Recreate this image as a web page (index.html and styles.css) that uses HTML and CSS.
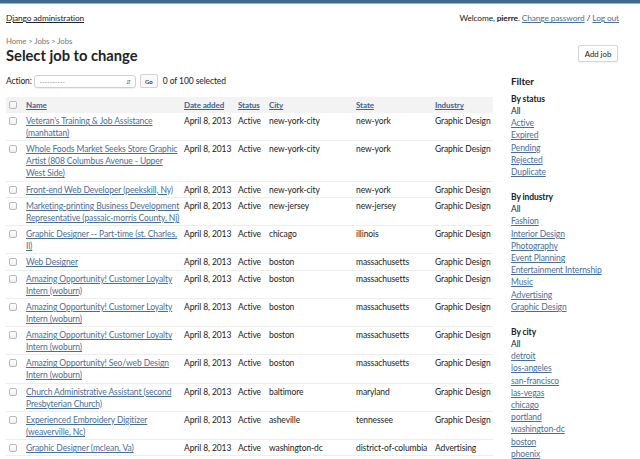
FILE: index.html
```html
<!DOCTYPE html>
<html>
<head>
<meta charset="utf-8">
<link rel="stylesheet" href="styles.css">
</head>
<body>
<div class="topbar"></div>
<div class="header">
  <a class="brand" href="#">Django administration</a>
  <div class="user-tools">Welcome, <b>pierre</b>. <a href="#">Change password</a> / <a href="#">Log out</a></div>
</div>
<div class="breadcrumbs">Home &gt; Jobs &gt; Jobs</div>
<div class="title-row">
  <h1>Select job to change</h1>
  <button class="add-btn">Add job</button>
</div>
<div class="content">
  <div class="main">
    <div class="actions">
      <span class="label">Action:</span>
      <span class="select"><span>----------</span><span class="arrows">&#8693;</span></span>
      <button class="go">Go</button>
      <span class="count">0 of 100 selected</span>
    </div>
    <table class="results">
      <colgroup>
        <col class="c-check"><col class="c-name"><col class="c-date"><col class="c-status"><col class="c-city"><col class="c-state"><col class="c-ind">
      </colgroup>
      <thead>
        <tr><th><span class="cb"></span></th><th><a href="#">Name</a></th><th><a href="#">Date added</a></th><th><a href="#">Status</a></th><th><a href="#">City</a></th><th><a href="#">State</a></th><th><a href="#">Industry</a></th></tr>
      </thead>
      <tbody>
        <tr><td><span class="cb"></span></td><td><a href="#">Veteran's Training &amp; Job Assistance (manhattan)</a></td><td>April 8, 2013</td><td>Active</td><td>new-york-city</td><td>new-york</td><td>Graphic Design</td></tr>
        <tr><td><span class="cb"></span></td><td><a href="#">Whole Foods Market Seeks Store Graphic Artist (808 Columbus Avenue - Upper West Side)</a></td><td>April 8, 2013</td><td>Active</td><td>new-york-city</td><td>new-york</td><td>Graphic Design</td></tr>
        <tr><td><span class="cb"></span></td><td><a href="#">Front-end Web Developer (peekskill, Ny)</a></td><td>April 8, 2013</td><td>Active</td><td>new-york-city</td><td>new-york</td><td>Graphic Design</td></tr>
        <tr><td><span class="cb"></span></td><td><a href="#">Marketing-printing Business Development Representative (passaic-morris County, Nj)</a></td><td>April 8, 2013</td><td>Active</td><td>new-jersey</td><td>new-jersey</td><td>Graphic Design</td></tr>
        <tr><td><span class="cb"></span></td><td><a href="#">Graphic Designer -- Part-time (st. Charles, Il)</a></td><td>April 8, 2013</td><td>Active</td><td>chicago</td><td>illinois</td><td>Graphic Design</td></tr>
        <tr><td><span class="cb"></span></td><td><a href="#">Web Designer</a></td><td>April 8, 2013</td><td>Active</td><td>boston</td><td>massachusetts</td><td>Graphic Design</td></tr>
        <tr><td><span class="cb"></span></td><td><a href="#">Amazing Opportunity! Customer Loyalty Intern (woburn)</a></td><td>April 8, 2013</td><td>Active</td><td>boston</td><td>massachusetts</td><td>Graphic Design</td></tr>
        <tr><td><span class="cb"></span></td><td><a href="#">Amazing Opportunity! Customer Loyalty Intern (woburn)</a></td><td>April 8, 2013</td><td>Active</td><td>boston</td><td>massachusetts</td><td>Graphic Design</td></tr>
        <tr><td><span class="cb"></span></td><td><a href="#">Amazing Opportunity! Customer Loyalty Intern (woburn)</a></td><td>April 8, 2013</td><td>Active</td><td>boston</td><td>massachusetts</td><td>Graphic Design</td></tr>
        <tr><td><span class="cb"></span></td><td><a href="#">Amazing Opportunity! Seo/web Design Intern (woburn)</a></td><td>April 8, 2013</td><td>Active</td><td>boston</td><td>massachusetts</td><td>Graphic Design</td></tr>
        <tr><td><span class="cb"></span></td><td><a href="#">Church Administrative Assistant (second Presbyterian Church)</a></td><td>April 8, 2013</td><td>Active</td><td>baltimore</td><td>maryland</td><td>Graphic Design</td></tr>
        <tr><td><span class="cb"></span></td><td><a href="#">Experienced Embroidery Digitizer (weaverville, Nc)</a></td><td>April 8, 2013</td><td>Active</td><td>asheville</td><td>tennessee</td><td>Graphic Design</td></tr>
        <tr><td><span class="cb"></span></td><td><a href="#">Graphic Designer (mclean, Va)</a></td><td>April 8, 2013</td><td>Active</td><td>washington-dc</td><td>district-of-columbia</td><td>Advertising</td></tr>
      </tbody>
    </table>
  </div>
  <div class="filter">
    <h2>Filter</h2>
    <h3>By status</h3>
    <ul>
      <li class="sel">All</li><li><a href="#">Active</a></li><li><a href="#">Expired</a></li><li><a href="#">Pending</a></li><li><a href="#">Rejected</a></li><li><a href="#">Duplicate</a></li>
    </ul>
    <h3>By industry</h3>
    <ul>
      <li class="sel">All</li><li><a href="#">Fashion</a></li><li><a href="#">Interior Design</a></li><li><a href="#">Photography</a></li><li><a href="#">Event Planning</a></li><li><a href="#">Entertainment Internship</a></li><li><a href="#">Music</a></li><li><a href="#">Advertising</a></li><li><a href="#">Graphic Design</a></li>
    </ul>
    <h3>By city</h3>
    <ul>
      <li class="sel">All</li><li><a href="#">detroit</a></li><li><a href="#">los-angeles</a></li><li><a href="#">san-francisco</a></li><li><a href="#">las-vegas</a></li><li><a href="#">chicago</a></li><li><a href="#">portland</a></li><li><a href="#">washington-dc</a></li><li><a href="#">boston</a></li><li><a href="#">phoenix</a></li>
    </ul>
  </div>
</div>
</body>
</html>
```

FILE: styles.css
```css
html, body {
  margin: 0;
  padding: 0;
  background: #fff;
  font-family: Lato, "Liberation Sans", sans-serif;
  font-size: 8.5px;
  letter-spacing: -0.1px;
  color: #222;
  overflow: hidden;
}
a { color: #4a6e97; text-decoration: underline; }

.topbar {
  height: 3px;
  background: #3c6b8d;
  border-bottom: 1px solid #9db3c4;
}
.header {
  display: flex;
  justify-content: space-between;
  align-items: center;
  padding: 7px 21px 0 6px;
  height: 14px;
}
.brand { color: #222; font-size: 8.3px; }
.user-tools { font-size: 8.3px; color: #222; }

.breadcrumbs {
  padding: 11px 6px 0;
  font-size: 7.8px;
  color: #777;
}
.title-row {
  display: flex;
  justify-content: space-between;
  align-items: flex-start;
  padding: 0 22px 0 6px;
}
h1 {
  margin: 0;
  font-size: 14.7px;
  font-weight: 700;
  line-height: 18px;
  letter-spacing: 0;
}
.add-btn {
  font: 7.8px Lato, "Liberation Sans", sans-serif;
  background: #fdfdfd;
  border: 1px solid #d6d6d6;
  border-radius: 2px;
  height: 17px;
  width: 40px;
  padding: 0;
  margin-top: -1px;
  color: #222;
  box-shadow: 0 1px 1px rgba(0,0,0,.05);
}

.content {
  display: flex;
  gap: 18px;
  padding: 10px 0 0 6px;
}
.main { width: 487px; }

.actions {
  display: flex;
  align-items: center;
  gap: 2px;
  height: 14px;
}
.select {
  width: 92px;
  height: 11px;
  border: 1px solid #cfcfcf;
  border-radius: 3px;
  display: flex;
  justify-content: space-between;
  align-items: center;
  padding: 0 3px 0 5px;
  font-size: 6px;
  letter-spacing: 0.3px;
  color: #444;
  box-shadow: 0 1px 1px rgba(0,0,0,.06);
}
.arrows { font-size: 6px; color: #666; }
.go {
  font: 6px Lato, "Liberation Sans", sans-serif;
  background: #fafafa;
  border: 1px solid #d4d4d4;
  border-radius: 2px;
  height: 14px;
  width: 18px;
  padding: 0;
  margin-left: 2px;
}
.count { margin-left: 3px; }

.results {
  margin-top: 9px;
  width: 487px;
  border-collapse: collapse;
  table-layout: fixed;
}
.c-check { width: 17px; }
.c-name { width: 158px; }
.c-date { width: 54px; }
.c-status { width: 31px; }
.c-city { width: 87px; }
.c-state { width: 79px; }
.c-ind { width: 61px; }

.results th {
  background: #f3f3f3;
  text-align: left;
  font-weight: 700;
  font-size: 8px;
  padding: 2px 1px 2px 3px;
  line-height: 12px;
  height: 12px;
  white-space: nowrap;
}
.results th a { color: #3e6593; }
.results td {
  vertical-align: top;
  padding: 2px 1px 1.25px 3px;
  line-height: 12px;
  border-bottom: 1px solid #eee;
  white-space: nowrap;
}
.results td:nth-child(2) { white-space: normal; }

.cb {
  display: inline-block;
  width: 6px;
  height: 6px;
  border: 1px solid #b9b9b9;
  border-radius: 2px;
  background: linear-gradient(#fff, #f0f0f0);
  vertical-align: -1px;
}

.filter { width: 120px; padding-top: 1px; }
.filter h2 {
  margin: 0;
  font-size: 10px;
  font-weight: 700;
  line-height: 12px;
}
.filter h3 {
  margin: 6px 0 0;
  font-size: 8.5px;
  font-weight: 700;
  line-height: 12px;
}
.filter ul {
  list-style: none;
  margin: 0 0 13px;
  padding: 0;
}
.filter li { line-height: 12.2px; font-size: 8.5px; }
.filter li.sel { color: #222; }
```
